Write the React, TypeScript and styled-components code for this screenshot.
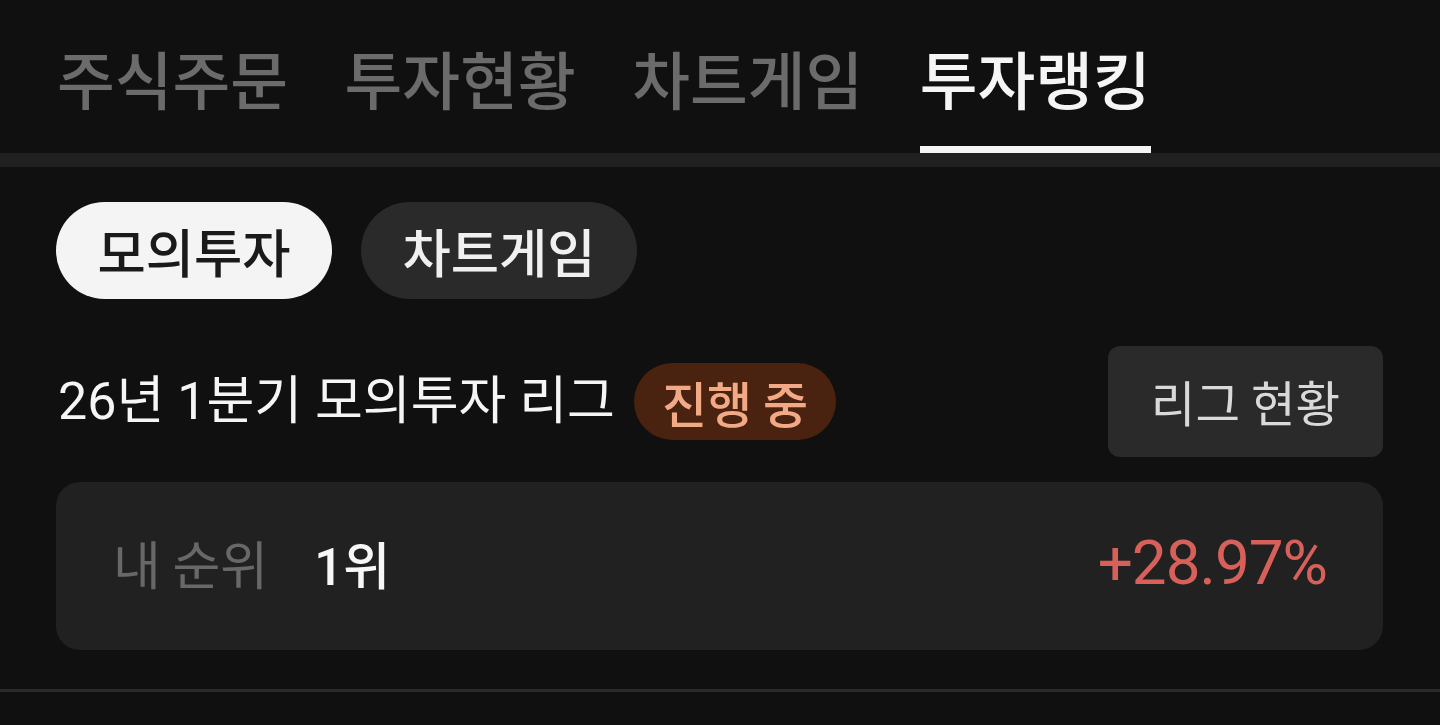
import React from "react";
import styled, { createGlobalStyle } from "styled-components";

const GlobalStyle = createGlobalStyle`
  html, body {
    margin: 0;
    padding: 0;
    background: #101010;
  }
  body {
    font-family: "Roboto", "Noto Sans CJK KR", sans-serif;
    -webkit-font-smoothing: antialiased;
  }
`;

const Page = styled.div`
  width: 1440px;
  height: 725px;
  background: #101010;
  overflow: hidden;
`;

const TabBar = styled.nav`
  display: flex;
  height: 153px;
  padding-left: 57px;
  gap: 56.5px;
`;

const Tab = styled.div<{ $active?: boolean }>`
  display: flex;
  align-items: center;
  box-sizing: border-box;
  height: 100%;
  padding-top: 8px;
  border-bottom: 7px solid ${(p) => (p.$active ? "#f5f5f5" : "transparent")};
  font-family: "Noto Sans CJK KR", sans-serif;
  font-size: 62.8px;
  font-weight: 500;
  line-height: 1;
  color: ${(p) => (p.$active ? "#f5f5f5" : "#6b6b6b")};
  cursor: pointer;
`;

const Divider = styled.div<{ $size: number; $color: string }>`
  height: ${(p) => p.$size}px;
  background: ${(p) => p.$color};
`;

const Content = styled.main`
  padding: 35px 57px 39px 56px;
  display: flex;
  flex-direction: column;
`;

const PillRow = styled.div`
  display: flex;
  gap: 29px;
`;

const Pill = styled.button<{ $active?: boolean }>`
  display: flex;
  align-items: center;
  justify-content: center;
  width: 276px;
  height: 97px;
  border: none;
  border-radius: 49px;
  padding: 0;
  background: ${(p) => (p.$active ? "#f4f4f4" : "#2a2a2a")};
  color: ${(p) => (p.$active ? "#1a1a1a" : "#f0f0f0")};
  font-family: "Noto Sans CJK KR", sans-serif;
  font-size: 52.5px;
  font-weight: 500;
  line-height: 1;
  cursor: pointer;
`;

const LeagueRow = styled.div`
  display: flex;
  align-items: center;
  justify-content: space-between;
  margin-top: 47px;
  height: 111px;
`;

const LeagueTitle = styled.div`
  display: flex;
  align-items: center;
  gap: 19px;
`;

const TitleText = styled.h2`
  margin: 0;
  padding-left: 2px;
  font-family: "Roboto", "Noto Sans CJK KR", sans-serif;
  font-size: 52px;
  font-weight: 400;
  line-height: 1;
  color: #f5f5f5;
  white-space: nowrap;
`;

const Badge = styled.span`
  display: inline-flex;
  align-items: center;
  height: 77px;
  padding: 0 28px;
  border-radius: 39px;
  background: #4a2210;
  color: #f2a985;
  font-family: "Noto Sans CJK KR", sans-serif;
  font-size: 49px;
  font-weight: 500;
  line-height: 1;
  white-space: nowrap;
`;

const StatusButton = styled.button`
  width: 275px;
  height: 111px;
  border: none;
  border-radius: 12px;
  background: #2a2a2a;
  color: #d9d9d9;
  font-family: "Noto Sans CJK KR", sans-serif;
  font-size: 48.5px;
  font-weight: 400;
  line-height: 1;
  cursor: pointer;
`;

const RankCard = styled.section`
  display: flex;
  align-items: center;
  justify-content: space-between;
  box-sizing: border-box;
  height: 168px;
  margin-top: 25px;
  padding: 0 56px 8px 57px;
  border-radius: 24px;
  background: #212121;
`;

const RankInfo = styled.div`
  display: flex;
  align-items: baseline;
  gap: 46px;
`;

const RankLabel = styled.span`
  font-family: "Noto Sans CJK KR", sans-serif;
  font-size: 52px;
  font-weight: 400;
  color: #686868;
`;

const RankValue = styled.span`
  font-family: "Roboto", "Noto Sans CJK KR", sans-serif;
  font-size: 51px;
  font-weight: 500;
  color: #f7f7f7;
`;

const Rate = styled.span<{ $up: boolean }>`
  font-family: "Roboto", sans-serif;
  font-size: 62px;
  font-weight: 400;
  letter-spacing: -1px;
  color: ${(p) => (p.$up ? "#d8605a" : "#4f8ff7")};
`;

const tabs = ["주식주문", "투자현황", "차트게임", "투자랭킹"];
const modes = ["모의투자", "차트게임"];

export default function App() {
  const [tab, setTab] = React.useState(3);
  const [mode, setMode] = React.useState(0);
  const rate = 28.97;

  return (
    <Page>
      <GlobalStyle />
      <TabBar>
        {tabs.map((t, i) => (
          <Tab key={t} $active={tab === i} onClick={() => setTab(i)}>
            {t}
          </Tab>
        ))}
      </TabBar>
      <Divider $size={14} $color="#202020" />
      <Content>
        <PillRow>
          {modes.map((m, i) => (
            <Pill key={m} $active={mode === i} onClick={() => setMode(i)}>
              {m}
            </Pill>
          ))}
        </PillRow>
        <LeagueRow>
          <LeagueTitle>
            <TitleText>26년 1분기 모의투자 리그</TitleText>
            <Badge>진행 중</Badge>
          </LeagueTitle>
          <StatusButton>리그 현황</StatusButton>
        </LeagueRow>
        <RankCard>
          <RankInfo>
            <RankLabel>내 순위</RankLabel>
            <RankValue>1위</RankValue>
          </RankInfo>
          <Rate $up={rate >= 0}>
            {rate >= 0 ? "+" : ""}
            {rate.toFixed(2)}%
          </Rate>
        </RankCard>
      </Content>
      <Divider $size={3} $color="#2a2a2a" />
    </Page>
  );
}
